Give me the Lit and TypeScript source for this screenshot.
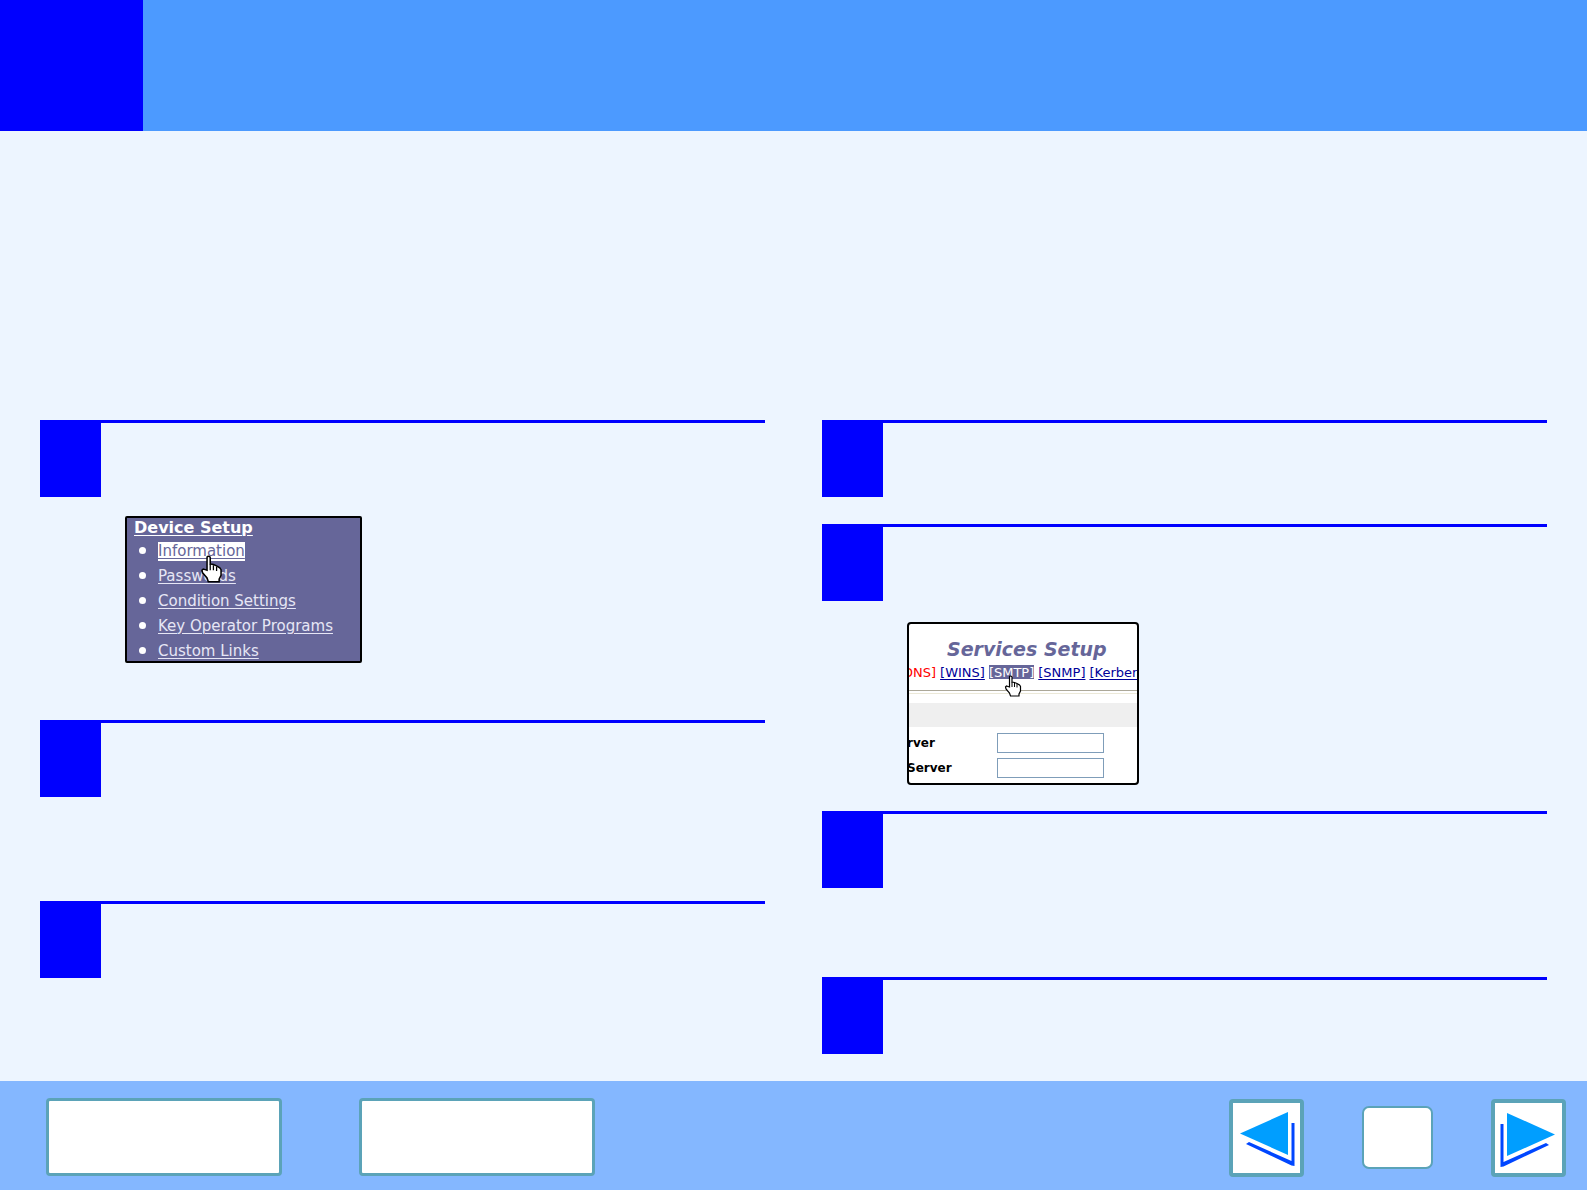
import { LitElement, html, svg, css } from "lit";
import { customElement, property } from "lit/decorators.js";

const hand = svg`
  <path d="M5.500 12 V2 Q5.500 1 6.500 1 Q8 1 8 2 V7 L10.500 7.500 L13 8.500 L15.500 10 L16.500 11.500 V16 L15 19 V21 H6.500 L5.500 18 L2 14 L1.500 12 L2.500 11 L4 11.500 Z"
    fill="#fff" stroke="#000" stroke-width="1.200" stroke-linejoin="miter"/>
  <path d="M8 7 V12 M10.500 8 V12 M13 9 V12.500" fill="none" stroke="#000" stroke-width="1"/>`;

@customElement("step-block")
class StepBlock extends LitElement {
  static styles = css`
    :host { display: block; }
    .rule { border-top: 3px solid #00f; }
    .marker { width: 61px; height: 74px; background: #00f; }
    .body { padding-left: 85px; }
  `;
  render() {
    return html`<section>
      <div class="rule"><div class="marker"></div></div>
      <div class="body"><slot></slot></div>
    </section>`;
  }
}

@customElement("device-menu")
class DeviceMenu extends LitElement {
  @property() current = "Information";
  static styles = css`
    :host { display: block; }
    .panel {
      box-sizing: border-box; width: 237px; height: 147px; overflow: hidden;
      border: 2px solid #000; border-radius: 2px; background: #669;
      font-family: "DejaVu Sans", Verdana, sans-serif; color: #fff; padding-left: 7px;
    }
    a { color: inherit; text-decoration: underline; text-decoration-thickness: 1px; text-underline-offset: 2px; }
    .title { margin: 0; font-size: 16px; line-height: 20px; font-weight: bold; }
    ul { list-style: none; margin: 0; padding: 0; }
    li { display: flex; align-items: center; gap: 12px; height: 25px; padding-left: 5px; font-size: 15px; color: #e6e6f5; }
    li::before { content: ""; width: 7px; height: 7px; border-radius: 50%; background: #fff; }
    li a { line-height: 18px; position: relative; }
    .current { background: #fff; color: #669; box-shadow: 0 1px #fff; }
    .hand { position: absolute; left: 42px; top: 13px; width: 23px; height: 28px; z-index: 1; }
  `;
  render() {
    const items = ["Information", "Passwords", "Condition Settings", "Key Operator Programs", "Custom Links"];
    return html`<nav class="panel" aria-label="Device Setup">
      <h2 class="title"><a href="#">Device Setup</a></h2>
      <ul>${items.map((t) => html`<li><a href="#" class=${t === this.current ? "current" : ""}>${t}${t === this.current
        ? html`<svg class="hand" viewBox="0 0 18 22" aria-hidden="true">${hand}</svg>` : ""}</a></li>`)}</ul>
    </nav>`;
  }
}

@customElement("services-setup")
class ServicesSetup extends LitElement {
  static styles = css`
    :host { display: block; }
    .panel {
      box-sizing: border-box; width: 232px; height: 163px; overflow: hidden;
      border: 2px solid #000; border-radius: 4px; background: #fff;
      font-family: "DejaVu Sans", Verdana, sans-serif; font-size: 13px;
    }
    h2 { margin: 0; padding: 13px 0 0 38px; font-size: 19px; line-height: 24px; font-style: italic; font-weight: bold; color: #669; white-space: nowrap; }
    .tabs { display: flex; gap: 4px; margin: 4px 0 0 -6px; line-height: 15px; white-space: nowrap; color: #f00; }
    .tabs a { color: #009; text-decoration: underline; text-underline-offset: 2px; position: relative; }
    .tabs .current { background: #669; color: #fff; }
    .hand { position: absolute; left: 15px; top: 10px; width: 18px; height: 22px; z-index: 1; }
    .rule { border-top: 1px solid #aca899; border-bottom: 1px solid #ece9d8; height: 2px; margin-top: 10px; }
    .band { height: 24px; margin: 9px 0 6px; background: #efefef; }
    .field { display: flex; align-items: center; justify-content: space-between; height: 20px; margin: 0 33px 5px -2px; font-size: 12px; font-weight: bold; }
    .field input { box-sizing: border-box; width: 107px; height: 20px; border: 1px solid #7f9db9; background: #fff; padding: 0 2px; }
  `;
  render() {
    return html`<section class="panel">
      <h2>Services Setup</h2>
      <nav class="tabs">
        <span>DNS]</span><a href="#">[WINS]</a><a href="#" class="current">[SMTP]<svg class="hand" viewBox="0 0 18 22" aria-hidden="true">${hand}</svg></a><a href="#">[SNMP]</a><a href="#">[Kerber</a>
      </nav>
      <div class="rule"></div>
      <div class="band"></div>
      <div class="field"><label for="a">rver</label><input id="a" type="text"></div>
      <div class="field"><label for="b">Server</label><input id="b" type="text"></div>
    </section>`;
  }
}

@customElement("app-root")
class AppRoot extends LitElement {
  static styles = css`
    :host { display: flex; flex-direction: column; min-height: 100vh; background: #edf5ff; }
    .header { height: 131px; background: #4c9aff; }
    .corner { width: 143px; height: 131px; background: #00f; }
    .columns { flex: 1; display: grid; grid-template-columns: 1fr 1fr; gap: 57px; padding: 289px 40px 27px; }
    .column { display: flex; flex-direction: column; }
    .first { min-height: 300px; }
    .second { min-height: 181px; }
    .short { min-height: 104px; }
    .tall { min-height: 287px; }
    .medium { min-height: 166px; }
    device-menu { margin-top: 19px; }
    services-setup { margin-top: 21px; }
    .footer { box-sizing: border-box; height: 109px; background: #84b7ff; display: flex; align-items: center; padding: 2px 21px 0 46px; }
    button { box-sizing: border-box; padding: 0; background: #fff; border: 3px solid #5ba3b8; border-radius: 4px; }
    .wide { width: 236px; height: 78px; margin-right: 77px; }
    .pager { margin-left: auto; padding-top: 2px; display: flex; align-items: center; gap: 58px; }
    .arrow { width: 75px; height: 78px; border-width: 4px; }
    .arrow svg { display: block; width: 67px; height: 70px; }
    .page { box-sizing: border-box; width: 71px; height: 63px; padding: 0; background: #fff; border: 2px solid #5ba3b8; border-radius: 7px; }
  `;
  render() {
    return html`
      <header class="header"><div class="corner"></div></header>
      <main class="columns">
        <div class="column">
          <step-block class="first"><device-menu></device-menu></step-block>
          <step-block class="second"></step-block>
          <step-block></step-block>
        </div>
        <div class="column">
          <step-block class="short"></step-block>
          <step-block class="tall"><services-setup></services-setup></step-block>
          <step-block class="medium"></step-block>
          <step-block></step-block>
        </div>
      </main>
      <footer class="footer">
        <button class="wide" aria-label="Contents"></button>
        <button class="wide" aria-label="Index"></button>
        <div class="pager">
          <button class="arrow" aria-label="Previous page">
            <svg viewBox="0 0 67 70" aria-hidden="true">
              <path d="M7 30.500 L55 9 V52 Z" fill="#009eff"/>
              <path d="M13 41 L16 39 L58.500 58 V20 H61.500 V63 L58.500 62.500 Z" fill="#0046ff"/>
            </svg>
          </button>
          <div class="page"></div>
          <button class="arrow" aria-label="Next page">
            <svg viewBox="0 0 67 70" aria-hidden="true">
              <path d="M60 31.500 L12 10 V53 Z" fill="#009eff"/>
              <path d="M54 42 L51 40 L8.500 59 V21 H5.500 V64 L8.500 63.500 Z" fill="#0046ff"/>
            </svg>
          </button>
        </div>
      </footer>`;
  }
}
